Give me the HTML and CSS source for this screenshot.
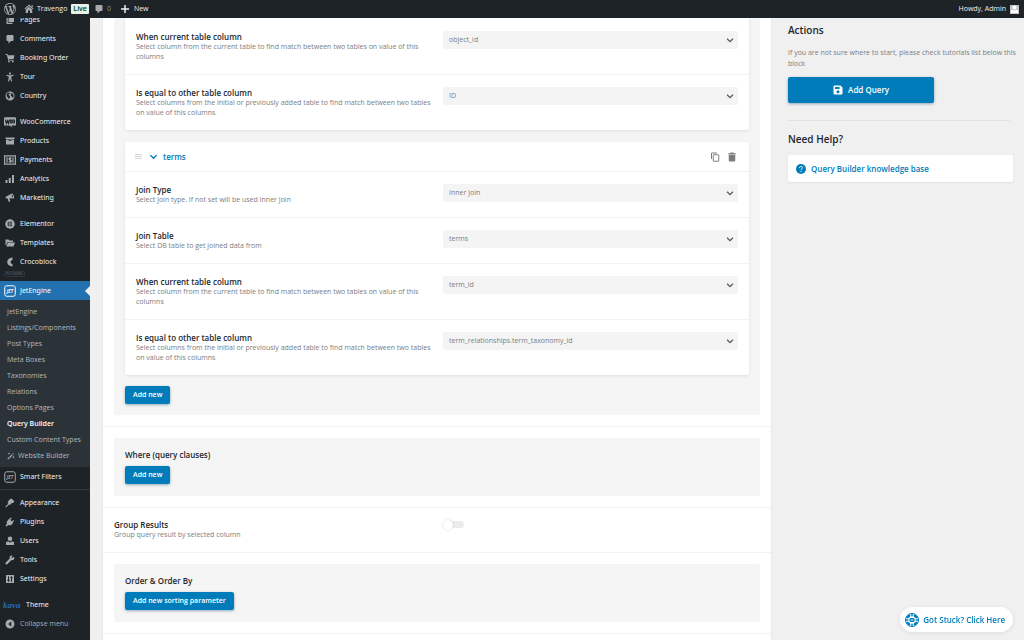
FILE: index.html
```html
<!DOCTYPE html>
<html lang="en">
<head>
<meta charset="utf-8">
<title>Query Builder</title>
<link rel="stylesheet" href="styles.css">
</head>
<body>
<svg class="sprite" aria-hidden="true">
  <symbol id="wp" viewBox="0 0 20 20"><path d="M20 10c0-5.51-4.49-10-10-10C4.48 0 0 4.49 0 10c0 5.52 4.48 10 10 10 5.51 0 10-4.48 10-10zM7.78 15.37L4.37 6.22c.55-.02 1.17-.08 1.17-.08.5-.06.44-1.13-.06-1.11 0 0-1.45.11-2.37.11-.18 0-.37 0-.58-.01C4.12 2.69 6.87 1.11 10 1.11c2.33 0 4.45.87 6.05 2.34-.68-.11-1.65.39-1.65 1.58 0 .74.45 1.36.9 2.1.35.61.55 1.36.55 2.46 0 1.49-1.4 5-1.4 5l-3.03-8.37c.54-.02.82-.17.82-.17.5-.05.44-1.25-.06-1.22 0 0-1.44.12-2.38.12-.87 0-2.33-.12-2.33-.12-.5-.03-.56 1.2-.06 1.22l.92.08 1.26 3.41zM17.41 10c.24-.64.74-1.87.43-4.25.7 1.29 1.05 2.71 1.05 4.25 0 3.29-1.73 6.24-4.4 7.78.97-2.59 1.94-5.2 2.92-7.78zM6.1 18.09C3.12 16.65 1.11 13.53 1.11 10c0-1.3.23-2.48.72-3.59C3.25 10.3 4.67 14.2 6.1 18.09zm4.03-6.63l2.58 6.98c-.86.29-1.76.45-2.71.45-.79 0-1.57-.11-2.29-.33.81-2.38 1.62-4.74 2.42-7.1z"/></symbol>
  <symbol id="home" viewBox="0 0 20 20"><path d="M10 1l9 8-1.400 1.500L10 3.800 2.400 10.500 1 9zM15 2.500h2.500V7L15 5zM10 5.500l6.500 5.700V18H12v-5H8v5H3.500v-6.800z"/></symbol>
  <symbol id="comment" viewBox="0 0 20 20"><path d="M5 2h10a2 2 0 0 1 2 2v8a2 2 0 0 1-2 2h-3l-5 5v-5H5a2 2 0 0 1-2-2V4a2 2 0 0 1 2-2z"/></symbol>
  <symbol id="plus" viewBox="0 0 20 20"><path d="M8.500 2h3v6.500H18v3h-6.500V18h-3v-6.500H2v-3h6.500z"/></symbol>
  <symbol id="page" viewBox="0 0 20 20"><path d="M7 2h11v12H7zM3 6h2.500v9.500H15V18H3z"/></symbol>
  <symbol id="cart" viewBox="0 0 20 20"><path d="M1 2h4l.8 2.500H19L17 12H7.500l.4 1.500H17V15H6.500L3.800 3.800H1z"/><circle cx="8" cy="17" r="1.800"/><circle cx="15.500" cy="17" r="1.800"/></symbol>
  <symbol id="person" viewBox="0 0 20 20"><circle cx="10" cy="3" r="2.200"/><path d="M3 5.500l5.500 1h3l5.500-1 .3 1.800L12.500 9v3l2 7h-2L10 13.500 7.500 19h-2l2-7V9L2.700 7.300z"/></symbol>
  <symbol id="globe" viewBox="0 0 20 20"><path fill-rule="evenodd" d="M10 1a9 9 0 1 0 0 18 9 9 0 0 0 0-18zM4 4.500L8 3l2 1-1 2-2 .8.500 1.700 3 1.500-1 3L7.500 17 6 13 3 10.500zM12 4l3 1 2 3 .5 3-2 3-1.500-3-2.500-2 1-2-1.500-1z"/></symbol>
  <symbol id="woo" viewBox="0 0 20 20"><path d="M2 2h16a2 2 0 0 1 2 2v10a2 2 0 0 1-2 2h-6l2 3-5-3H2a2 2 0 0 1-2-2V4a2 2 0 0 1 2-2z"/><path class="cut" d="M2.500 6l1.500 6 2-4 1.500 4L9 6"/><ellipse class="cut" cx="11.800" cy="9" rx="1.500" ry="2.700"/><ellipse class="cut" cx="16" cy="9" rx="1.500" ry="2.700"/></symbol>
  <symbol id="box" viewBox="0 0 20 20"><path fill-rule="evenodd" d="M1 3h18v3H1zM2 7h16v10H2zM7 8.500V10h6V8.500z"/></symbol>
  <symbol id="money" viewBox="0 0 20 20"><path fill-rule="evenodd" d="M0 2h20v16H0zM2 4v12h16V4z"/><path d="M4 5.500h2v9H4zM14 5.500h2v9h-2z"/><path class="line" d="M12.200 7.500c-1-1-4-1-4 .7s4 1.500 4 3.300-3 1.800-4.200.7M10.200 5v10"/></symbol>
  <symbol id="bars" viewBox="0 0 20 20"><path d="M1 12h4v6H1zM7.500 8h4v10h-4zM14 2h4v16h-4z"/></symbol>
  <symbol id="horn" viewBox="0 0 20 20"><path fill-rule="evenodd" d="M1 8l4-2.500L14 1c3 1 5 6 4 10l-9-.5 1.500 6-3 1.500-2.500-7.500L2 11zM14 3.500c-1 1-.5 4 1.500 5.500 1-1 .5-4.500-1.500-5.500z"/></symbol>
  <symbol id="elementor" viewBox="0 0 20 20"><circle cx="10" cy="10" r="9.500"/><path class="cut" d="M6.500 5.500v9M9 6.500h5M9 10h5M9 13.500h5"/></symbol>
  <symbol id="folder" viewBox="0 0 20 20"><path d="M1 3h6l2 2h7v3H5L2.500 14H1zM6 9h14l-3 8H2.500z"/></symbol>
  <symbol id="croco" viewBox="0 0 20 20"><path d="M15 1v5c-5 0-5 8 0 8v5C1 19 1 1 15 1z"/></symbol>
  <symbol id="jet" viewBox="0 0 24 24"><rect class="frame" x="1.500" y="1.500" width="21" height="21" rx="4"/><text x="12" y="15.500" text-anchor="middle">JET</text></symbol>
  <symbol id="wand" viewBox="0 0 20 20"><path d="M1 17L12 6l2 2L3 19zM13 5l2-2 2 2-2 2zM5 1l1 2 2 1-2 1-1 2-1-2-2-1 2-1zM16 10l1 2 2 1-2 1-1 2-1-2-2-1 2-1z"/></symbol>
  <symbol id="brush" viewBox="0 0 20 20"><path d="M9 3l4-2 6 6-3 3-3 .5-3 3.500-2-1-6 6-1.500-1.500 6-6L5 9z"/></symbol>
  <symbol id="plug" viewBox="0 0 20 20"><path d="M12 1l1.500 1.500-3 3L14 9l3-3L18.500 7.500l-3 3 1 1-3 3.500c-2 2-5 2-7 1L3 19l-2-2 3-3.500c-1-2-1-4 1-6L8 4z"/></symbol>
  <symbol id="user" viewBox="0 0 20 20"><circle cx="10" cy="5.500" r="4.500"/><path d="M2 18v-5c1-2 4-2.500 5-2l3 2 3-2c1-.5 4 0 5 2v5z"/></symbol>
  <symbol id="wrench" viewBox="0 0 20 20"><path d="M17 4l-3 2-1-1 2-3.500c-4-1.500-7 2-5.500 5.500L1 15.500C0 18 2.500 20 4.500 18.500L13 10c3.500 1.500 7-2 5.500-5.500z"/></symbol>
  <symbol id="sliders" viewBox="0 0 20 20"><path d="M2 2h16v16H2z"/><path class="cut" d="M7 4.500v11M4.500 12.500h5M13 4.500v11M10.500 7.500h5"/></symbol>
  <symbol id="collapse" viewBox="0 0 20 20"><path fill-rule="evenodd" d="M10 1a9 9 0 1 0 0 18 9 9 0 0 0 0-18zM12.500 5v10L6.500 10z"/></symbol>
  <symbol id="chevron" viewBox="0 0 12 12"><path class="thin" d="M2.500 4.500L6 8l3.500-3.500"/></symbol>
  <symbol id="copy" viewBox="0 0 20 20"><path class="line" d="M3 14V2h11"/><rect class="frame" x="6.500" y="5.500" width="11" height="13" rx="1"/></symbol>
  <symbol id="trash" viewBox="0 0 20 20"><path d="M7 1h6l1 1.500h3.500V5h-15V2.500H6zM3.500 6h13v11a2 2 0 0 1-2 2h-9a2 2 0 0 1-2-2z"/></symbol>
  <symbol id="save" viewBox="0 0 20 20"><path fill-rule="evenodd" d="M3 1h12l4 4v12a2 2 0 0 1-2 2H3a2 2 0 0 1-2-2V3a2 2 0 0 1 2-2zM4 4v4h9V4zM10 10.500a3 3 0 1 0 0 6 3 3 0 0 0 0-6z"/></symbol>
  <symbol id="help" viewBox="0 0 20 20"><circle cx="10" cy="10" r="10"/><path class="mark" d="M7 8c0-4 6-4 6-.5 0 2-3 2.500-3 4.500M10 14v2"/></symbol>
  <symbol id="buoy" viewBox="0 0 28 28"><circle class="ring" cx="14" cy="14" r="10"/><circle class="edge" cx="14" cy="14" r="13"/><path class="gap" d="M11.500 2v6M16.500 2v6M11.500 20v6M16.500 20v6M2 11.500h6M2 16.500h6M20 11.500h6M20 16.500h6"/><rect x="9" y="10" width="10" height="8" rx="2"/><path class="gap" d="M11.500 14h5"/></symbol>
</svg>

<header class="adminbar">
  <a class="bar-item bar-logo" href="#" aria-label="WordPress"><svg class="icon logo"><use href="#wp"/></svg></a>
  <a class="bar-item bar-site" href="#"><svg class="icon"><use href="#home"/></svg>Travengo</a>
  <span class="live">Live</span>
  <a class="bar-item bar-comments" href="#"><svg class="icon"><use href="#comment"/></svg>0</a>
  <a class="bar-item bar-new" href="#"><svg class="icon"><use href="#plus"/></svg>New</a>
  <a class="bar-item bar-user" href="#">Howdy, Admin<span class="avatar"><svg class="avatar-icon"><use href="#user"/></svg></span></a>
</header>

<div class="shell">
  <nav class="menu" aria-label="Main menu">
    <a class="item" href="#"><svg class="icon"><use href="#page"/></svg>Pages</a>
    <a class="item" href="#"><svg class="icon"><use href="#comment"/></svg>Comments</a>
    <a class="item" href="#"><svg class="icon"><use href="#cart"/></svg>Booking Order</a>
    <a class="item" href="#"><svg class="icon"><use href="#person"/></svg>Tour</a>
    <a class="item" href="#"><svg class="icon"><use href="#globe"/></svg>Country</a>
    <div class="space"></div>
    <a class="item" href="#"><svg class="icon large"><use href="#woo"/></svg>WooCommerce</a>
    <a class="item" href="#"><svg class="icon"><use href="#box"/></svg>Products</a>
    <a class="item" href="#"><svg class="icon large"><use href="#money"/></svg>Payments</a>
    <a class="item" href="#"><svg class="icon"><use href="#bars"/></svg>Analytics</a>
    <a class="item" href="#"><svg class="icon"><use href="#horn"/></svg>Marketing</a>
    <div class="space"></div>
    <a class="item" href="#"><svg class="icon"><use href="#elementor"/></svg>Elementor</a>
    <a class="item" href="#"><svg class="icon"><use href="#folder"/></svg>Templates</a>
    <a class="item" href="#"><svg class="icon"><use href="#croco"/></svg>Crocoblock</a>
    <div class="group"><span class="group-tag">PLUGINS</span></div>
    <a class="item current" href="#"><svg class="icon large"><use href="#jet"/></svg>JetEngine</a>
    <div class="submenu">
      <a class="sub" href="#">JetEngine</a>
      <a class="sub" href="#">Listings/Components</a>
      <a class="sub" href="#">Post Types</a>
      <a class="sub" href="#">Meta Boxes</a>
      <a class="sub" href="#">Taxonomies</a>
      <a class="sub" href="#">Relations</a>
      <a class="sub" href="#">Options Pages</a>
      <a class="sub active" href="#">Query Builder</a>
      <a class="sub" href="#">Custom Content Types</a>
      <a class="sub" href="#"><svg class="icon small"><use href="#wand"/></svg>Website Builder</a>
    </div>
    <a class="item" href="#"><svg class="icon large"><use href="#jet"/></svg>Smart Filters</a>
    <div class="space ruled"></div>
    <a class="item" href="#"><svg class="icon"><use href="#brush"/></svg>Appearance</a>
    <a class="item" href="#"><svg class="icon"><use href="#plug"/></svg>Plugins</a>
    <a class="item" href="#"><svg class="icon"><use href="#user"/></svg>Users</a>
    <a class="item" href="#"><svg class="icon"><use href="#wrench"/></svg>Tools</a>
    <a class="item" href="#"><svg class="icon"><use href="#sliders"/></svg>Settings</a>
    <div class="space"></div>
    <a class="item theme" href="#"><span class="kava">kava</span>Theme</a>
    <button class="item collapse" type="button"><svg class="icon"><use href="#collapse"/></svg>Collapse menu</button>
  </nav>

  <div class="content">
    <main class="panel">
      <section class="block joins">
        <div class="card card-cut">
          <div class="row">
            <div class="label"><label class="title" for="c1">When current table column</label><p class="desc">Select column from the current table to find match between two tables on value of this columns</p></div>
            <div class="field"><select id="c1" class="select"><option>object_id</option></select><svg class="arrow"><use href="#chevron"/></svg></div>
          </div>
          <div class="row">
            <div class="label"><label class="title" for="c2">Is equal to other table column</label><p class="desc">Select columns from the initial or previously added table to find match between two tables on value of this columns</p></div>
            <div class="field"><select id="c2" class="select"><option>ID</option></select><svg class="arrow"><use href="#chevron"/></svg></div>
          </div>
        </div>
        <div class="card">
          <div class="card-head">
            <span class="grip"></span>
            <button class="toggle-card" type="button"><svg class="fold"><use href="#chevron"/></svg>terms</button>
            <button class="tool" type="button" aria-label="Copy"><svg class="icon"><use href="#copy"/></svg></button>
            <button class="tool" type="button" aria-label="Delete"><svg class="icon"><use href="#trash"/></svg></button>
          </div>
          <div class="row">
            <div class="label"><label class="title" for="t1">Join Type</label><p class="desc">Select join type. If not set will be used Inner Join</p></div>
            <div class="field"><select id="t1" class="select"><option>Inner Join</option></select><svg class="arrow"><use href="#chevron"/></svg></div>
          </div>
          <div class="row">
            <div class="label"><label class="title" for="t2">Join Table</label><p class="desc">Select DB table to get joined data from</p></div>
            <div class="field"><select id="t2" class="select"><option>terms</option></select><svg class="arrow"><use href="#chevron"/></svg></div>
          </div>
          <div class="row">
            <div class="label"><label class="title" for="t3">When current table column</label><p class="desc">Select column from the current table to find match between two tables on value of this columns</p></div>
            <div class="field"><select id="t3" class="select"><option>term_id</option></select><svg class="arrow"><use href="#chevron"/></svg></div>
          </div>
          <div class="row">
            <div class="label"><label class="title" for="t4">Is equal to other table column</label><p class="desc">Select columns from the initial or previously added table to find match between two tables on value of this columns</p></div>
            <div class="field"><select id="t4" class="select"><option>term_relationships.term_taxonomy_id</option></select><svg class="arrow"><use href="#chevron"/></svg></div>
          </div>
        </div>
        <button class="btn" type="button">Add new</button>
      </section>
      <hr class="rule">
      <section class="block">
        <h2 class="title block-title">Where (query clauses)</h2>
        <button class="btn" type="button">Add new</button>
      </section>
      <hr class="rule">
      <div class="row group-row">
        <div class="label"><label class="title" for="group">Group Results</label><p class="desc">Group query result by selected column</p></div>
        <div class="field"><input id="group" class="switch" type="checkbox"></div>
      </div>
      <hr class="rule">
      <section class="block">
        <h2 class="title block-title">Order &amp; Order By</h2>
        <button class="btn" type="button">Add new sorting parameter</button>
      </section>
      <hr class="rule">
    </main>

    <aside class="aside">
      <h2 class="heading">Actions</h2>
      <p class="hint">If you are not sure where to start, please check tutorials list below this block</p>
      <button class="btn btn-main" type="button"><svg class="icon"><use href="#save"/></svg>Add Query</button>
      <hr class="divider">
      <h2 class="heading">Need Help?</h2>
      <a class="help" href="#"><svg class="icon"><use href="#help"/></svg>Query Builder knowledge base</a>
    </aside>
  </div>
</div>

<button class="stuck" type="button"><svg class="buoy"><use href="#buoy"/></svg>Got Stuck? Click Here</button>
</body>
</html>
```
FILE: styles.css
```css
* { box-sizing: border-box; }
body {
  margin: 0;
  height: 100vh;
  overflow: hidden;
  display: flex;
  flex-direction: column;
  background: #f0f0f1;
  color: #23282d;
  font: 7px/10px "Open Sans", "Noto Sans", sans-serif;
}
a { color: inherit; text-decoration: none; }
button, select { font: inherit; border: 0; cursor: pointer; }
h2, p { margin: 0; }

.sprite { display: none; }
.icon { width: 10px; height: 10px; flex: none; fill: currentColor; }
.icon.large { width: 12px; height: 12px; }
.icon.small { width: 8px; height: 8px; }
.icon.logo { width: 12px; height: 12px; }
.line { fill: none; stroke: currentColor; stroke-width: 2; }
.thin { fill: none; stroke: currentColor; stroke-width: 1.5; }
.frame { fill: none; stroke: currentColor; stroke-width: 2; }
.cut { fill: none; stroke: #1d2327; stroke-width: 2; }
.mark { fill: none; stroke: #fff; stroke-width: 2; }
#jet text { font: italic 700 9px "Open Sans", sans-serif; fill: currentColor; }

.adminbar {
  flex: none;
  display: flex;
  align-items: center;
  height: 18px;
  padding: 0 5px 0 4px;
  background: #1d2327;
  color: #f0f0f1;
  position: relative;
  z-index: 1;
}
.bar-item { display: flex; align-items: center; gap: 4px; }
.bar-item .icon { color: #a7aaad; }
.bar-site { margin-left: 8px; }
.bar-site, .bar-comments { gap: 3px; }
.live {
  margin-left: 4px;
  padding: 0 2px;
  border-radius: 1px;
  background: #e6f2e8;
  color: #00450c;
  font-weight: 600;
}
.bar-comments { margin-left: 5px; color: #8c9196; }
.bar-new { margin-left: 9px; }
.bar-new .icon { color: #f0f0f1; }
.bar-user { margin-left: auto; }
.avatar { display: flex; width: 9px; height: 9px; background: #c3c4c7; }
.avatar-icon { width: 9px; height: 9px; fill: #fff; }

.shell { flex: 1; min-height: 0; display: flex; }
.menu {
  flex: none;
  display: flex;
  flex-direction: column;
  width: 90px;
  margin-top: -8px;
  background: #1d2327;
  color: #f0f0f1;
}
.item {
  flex: none;
  display: flex;
  align-items: center;
  gap: 5px;
  height: 19px;
  padding: 0 0 0 5px;
  background: none;
  color: inherit;
  font-family: "Noto Sans", "Open Sans", sans-serif;
}
.item .icon { color: #a7aaad; }
.item .large { margin: 0 -1px; }
.space { flex: none; height: 7px; }
.ruled::before { content: ""; display: block; margin-top: 3px; border-top: 1px solid #363b40; }
.group { flex: none; display: flex; align-items: flex-start; height: 10px; padding-left: 4px; }
.group-tag { border: 1px solid #30363b; border-radius: 2px; padding: 0 1px; font-size: 4px; line-height: 4px; color: #6c7176; }
.current.item { background: #2271b1; color: #fff; }
.current .icon { color: #fff; }
.current::after {
  content: "";
  margin-left: auto;
  border: 5px solid transparent;
  border-left-width: 0;
  border-right-color: #f0f0f1;
}
.submenu { flex: none; padding: 4px 0 3px; background: #2c3338; }
.sub { display: flex; align-items: center; gap: 3px; height: 16px; padding-left: 7px; color: #b4b8bc; white-space: nowrap; }
.active { color: #fff; font-weight: 600; }
.kava { width: 18px; margin-left: -2px; color: #2b6aa6; font: italic 700 9px/10px "Liberation Serif", serif; }
.collapse.item { color: #a7aaad; font-family: "Open Sans", "Noto Sans", sans-serif; }

.content { flex: 1; display: flex; align-items: stretch; gap: 17px; min-width: 0; padding: 0 11px 0 13px; }
.panel { flex: 1; min-width: 0; background: #fff; box-shadow: 0 0 2px rgba(0, 0, 0, .08); }
.block { margin: 11px; padding: 11px 11px 12px; border-radius: 2px; background: #f5f5f5; }
.joins { margin-top: 0; padding: 0 11px 11px; }
.card { margin-bottom: 11px; border-radius: 2px; background: #fff; box-shadow: 0 1px 3px rgba(35, 40, 45, .1); }
.card-cut { margin-bottom: 12px; padding-top: 1px; border-radius: 0 0 2px 2px; }
.card-head { display: flex; align-items: center; height: 30px; padding: 0 12px 0 11px; border-bottom: 1px solid #f3f3f4; }
.grip { width: 7px; height: 5px; margin-left: -1px; border: solid #d5d5d5; border-width: 1px 0; background: linear-gradient(#d5d5d5, #d5d5d5) center / 100% 1px no-repeat; }
.toggle-card { display: flex; align-items: center; gap: 4px; margin: 0 auto 0 6px; padding: 0; background: none; color: #007cba; font-size: 8px; font-weight: 600; }
.fold { width: 11px; height: 11px; }
.tool { display: flex; margin-left: 7px; padding: 0; background: none; color: #7b7e81; }
.row { display: flex; padding: 12px 11px; }
.card .row + .row { border-top: 1px solid #f3f3f4; }
.panel .group-row { padding-top: 11px; }
.label { width: 51%; padding-right: 10px; }
.title { display: block; font-size: 8px; line-height: 11px; font-weight: 600; color: #23282d; }
.desc { color: #7b7e81; }
.field { flex: 1; display: grid; align-items: start; height: 18px; }
.select {
  grid-area: 1 / 1;
  appearance: none;
  width: 100%;
  height: 18px;
  padding: 0 6px;
  border-radius: 2px;
  background: #f4f4f5;
  color: #7b7e81;
}
.arrow { grid-area: 1 / 1; place-self: center end; width: 10px; height: 10px; margin-right: 3px; color: #50575e; pointer-events: none; }
.btn {
  height: 18px;
  padding: 0 8px;
  border-radius: 2px;
  background: #007cba;
  color: #fff;
  font-weight: 600;
  box-shadow: 0 1px 3px rgba(0, 60, 100, .4);
}
.block-title { margin-bottom: 6px; }
.block .btn { display: block; }
.rule { margin: 0; border: 0; border-top: 1px solid #f3f3f4; }
.switch {
  appearance: none;
  display: flex;
  align-items: center;
  width: 14px;
  height: 7px;
  margin: 2px 0 0 7px;
  border-radius: 4px;
  background: #ececec;
}
.switch::before { content: ""; flex: none; width: 10px; height: 10px; margin-left: -7px; border-radius: 50%; background: #fff; box-shadow: 0 0 2px rgba(0, 0, 0, .2); }

.aside { flex: none; width: 225px; padding-top: 6px; }
.heading { font-size: 10px; line-height: 13px; font-weight: 600; }
.hint { margin: 10px -8px 8px 0; line-height: 11px; color: #7b7e81; }
.btn-main { display: flex; align-items: center; justify-content: center; gap: 5px; width: 65%; height: 26px; font-size: 8px; }
.divider { margin: 17px 3px 12px 0; border: 0; border-top: 1px solid #e2e3e4; }
.help { display: flex; align-items: center; gap: 5px; height: 27px; margin-top: 9px; padding: 0 8px; border-radius: 2px; background: #fff; color: #007cba; font-size: 8px; font-weight: 600; box-shadow: 0 1px 2px rgba(0, 0, 0, .06); }

.stuck {
  position: fixed;
  right: 11px;
  bottom: 8px;
  display: flex;
  align-items: center;
  gap: 4px;
  height: 25px;
  padding: 0 8px 0 5px;
  border-radius: 13px;
  background: #fff;
  color: #007cba;
  font-size: 8px;
  font-weight: 600;
  box-shadow: 0 1px 4px rgba(0, 0, 0, .08);
}
.buoy { width: 14px; height: 14px; fill: currentColor; }
.ring { fill: none; stroke: currentColor; stroke-width: 5; }
.edge { fill: none; stroke: currentColor; stroke-width: 2; }
.gap { fill: none; stroke: #fff; stroke-width: 2; }
```
